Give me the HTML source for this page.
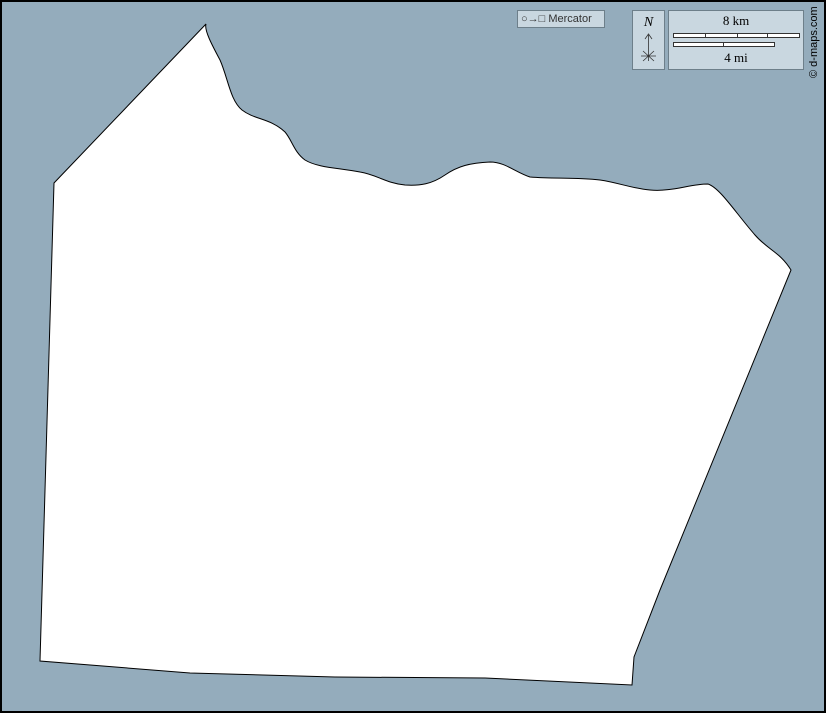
<!DOCTYPE html>
<html><head><style>
html,body{margin:0;padding:0;}
body{width:826px;height:713px;position:relative;overflow:hidden;background:#94acbc;font-family:"Liberation Sans",sans-serif;}
.frame{position:absolute;left:0;top:0;width:822px;height:709px;border:2px solid #000;}
.box{position:absolute;background:#c9d7e0;border:1px solid #6d7f8a;}
</style></head><body>
<svg width="826" height="713" style="position:absolute;left:0;top:0">
<path d="M206,24 C204,30 212,45 220,60 C228,78 230,100 242,110 C255,120 270,118 285,132 C292,140 294,152 305,160 C318,168 340,168 360,172 C378,175 385,183 405,185 C420,186 432,184 445,175 C458,166 470,163 490,162 C505,162 515,172 530,177 C555,179 575,177 600,180 C620,183 630,188 650,190 C672,192 690,184 708,184 C720,188 735,212 755,235 C768,250 780,252 791,270 L660,590 L634,657 L632,685 L485,678 L335,677 L190,673 L40,661 L54,183 Z" fill="#fff" stroke="#000" stroke-width="1"/>
</svg>
<div class="frame"></div>
<div class="box" style="left:517px;top:10px;width:86px;height:16px;font-size:11px;color:#333;line-height:16px;text-indent:3px">○→□ Mercator</div>
<div class="box" style="left:632px;top:10px;width:31px;height:58px;">
<div style="font-family:'Liberation Serif',serif;font-style:italic;font-size:14px;text-align:center;margin-top:4px">N</div>
<svg width="31" height="36" style="position:absolute;left:0;top:20px"><path d="M15.5,4 V30 M12,8 L15.5,3 L19,8 M8,25 H23 M10,20 L21,30 M21,20 L10,30" stroke="#333" fill="none" stroke-width="0.8"/></svg>
</div>
<div class="box" style="left:668px;top:10px;width:134px;height:58px;font-family:'Liberation Serif',serif;font-size:13px;text-align:center">
<div style="position:absolute;top:2px;width:100%">8 km</div>
<div style="position:absolute;left:4px;top:22px;width:125px;height:3px;border:1px solid #333;background:#fff"></div>
<div style="position:absolute;left:36px;top:22px;width:31px;height:4px;border-left:1px solid #333;border-right:1px solid #333"></div>
<div style="position:absolute;left:98px;top:22px;height:4px;border-left:1px solid #333"></div>
<div style="position:absolute;left:4px;top:31px;width:100px;height:3px;border:1px solid #333;background:#fff"></div>
<div style="position:absolute;left:54px;top:31px;height:4px;border-left:1px solid #333"></div>
<div style="position:absolute;top:39px;width:100%">4 mi</div>
</div>
<div style="position:absolute;left:808px;top:78px;transform:rotate(-90deg);transform-origin:0 0;font-size:11px;color:#000;white-space:nowrap">© d-maps.com</div>
</body></html>
